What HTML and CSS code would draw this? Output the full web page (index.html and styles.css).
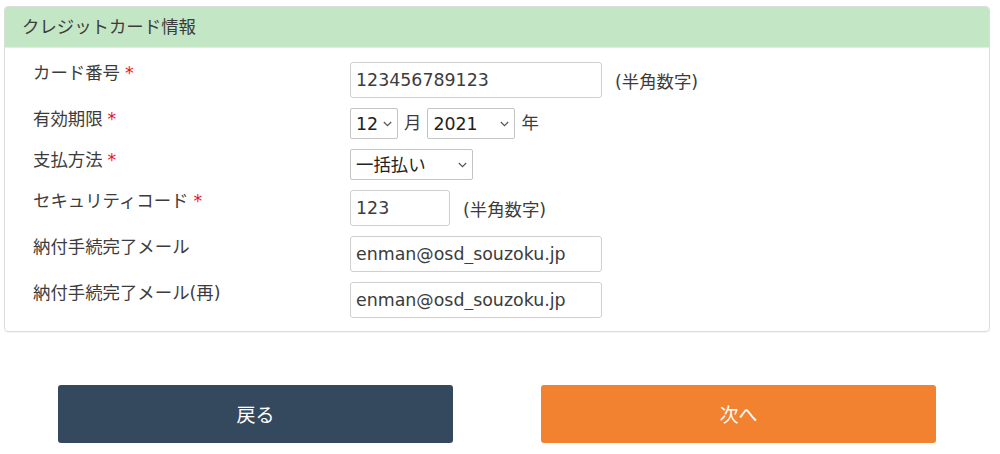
FILE: index.html
```html
<!DOCTYPE html>
<html lang="ja">
<head>
<meta charset="utf-8">
<title>クレジットカード情報</title>
<link rel="stylesheet" href="styles.css">
</head>
<body>
<div class="page">
  <section class="panel">
    <h2 class="panel-head">クレジットカード情報</h2>
    <div class="panel-body">
      <div class="row">
        <div class="label">カード番号<span class="req">*</span></div>
        <div class="field">
          <input class="input w-card" type="text" value="123456789123">
          <span class="note">(半角数字)</span>
        </div>
      </div>
      <div class="row">
        <div class="label">有効期限<span class="req">*</span></div>
        <div class="field gap-sm">
          <span class="select-wrap">
            <select class="select w-month"><option>12</option></select>
            <svg class="chev" width="9" height="6" viewBox="0 0 9 6"><path d="M0.8 1 L4.5 4.6 L8.2 1" fill="none" stroke="#555" stroke-width="1.2"/></svg>
          </span>
          <span class="unit">月</span>
          <span class="select-wrap">
            <select class="select w-year"><option>2021</option></select>
            <svg class="chev" width="9" height="6" viewBox="0 0 9 6"><path d="M0.8 1 L4.5 4.6 L8.2 1" fill="none" stroke="#555" stroke-width="1.2"/></svg>
          </span>
          <span class="unit">年</span>
        </div>
      </div>
      <div class="row">
        <div class="label">支払方法<span class="req">*</span></div>
        <div class="field">
          <span class="select-wrap">
            <select class="select w-pay"><option>一括払い</option></select>
            <svg class="chev" width="9" height="6" viewBox="0 0 9 6"><path d="M0.8 1 L4.5 4.6 L8.2 1" fill="none" stroke="#555" stroke-width="1.2"/></svg>
          </span>
        </div>
      </div>
      <div class="row">
        <div class="label">セキュリティコード<span class="req">*</span></div>
        <div class="field">
          <input class="input w-code" type="text" value="123">
          <span class="note">(半角数字)</span>
        </div>
      </div>
      <div class="row">
        <div class="label">納付手続完了メール</div>
        <div class="field">
          <input class="input w-card" type="text" value="enman@osd_souzoku.jp">
        </div>
      </div>
      <div class="row">
        <div class="label">納付手続完了メール(再)</div>
        <div class="field">
          <input class="input w-card" type="text" value="enman@osd_souzoku.jp">
        </div>
      </div>
    </div>
  </section>
  <div class="actions">
    <button class="btn btn-back" type="button">戻る</button>
    <button class="btn btn-next" type="button">次へ</button>
  </div>
</div>
</body>
</html>
```
FILE: styles.css
```css
* { box-sizing: border-box; }
html, body { margin: 0; padding: 0; background: #fff; }
body {
  font-family: "DejaVu Sans", "Noto Sans CJK JP", sans-serif;
  font-size: 17.4px;
  color: #3c3c3c;
}
.page {
  width: 986px;
  margin-left: 4px;
  padding-top: 6px;
}
.panel {
  border: 1px solid #dcdcdc;
  border-radius: 4px;
  box-shadow: 0 1px 1px rgba(0,0,0,0.04);
  overflow: hidden;
}
.panel-head {
  margin: 0;
  height: 41px;
  line-height: 41px;
  padding-left: 17px;
  background: #c3e6c4;
  font-size: 17.4px;
  font-weight: normal;
  color: #3c3c3c;
  border-bottom: 1px solid #e2eee2;
}
.panel-body {
  padding: 14px 0 3px 28px;
}
.row {
  display: grid;
  grid-template-columns: 317px 1fr;
  align-items: start;
  margin-bottom: 10px;
}
.label {
  line-height: 23px;
  white-space: nowrap;
}
.req {
  color: #e8141c;
  margin-left: 5px;
}
.field {
  display: flex;
  align-items: center;
  gap: 13px;
}
.field.gap-sm { gap: 6px; }
.input {
  height: 36px;
  border: 1px solid #cfcfcf;
  border-radius: 3px;
  padding: 0 5px;
  font: inherit;
  color: #3c3c3c;
  background: #fff;
}
.w-card { width: 252px; }
.w-code { width: 100px; }
.select-wrap {
  position: relative;
  display: inline-flex;
}
.select {
  -webkit-appearance: none;
  appearance: none;
  height: 31px;
  border: 1px solid #c4c4c4;
  border-radius: 2px;
  padding: 0 18px 0 5px;
  font: inherit;
  color: #222;
  background: #fff;
}
.chev {
  position: absolute;
  right: 6px;
  top: 13px;
  pointer-events: none;
}
.w-month { width: 48px; }
.w-year { width: 88px; }
.w-pay { width: 123px; }
.unit { line-height: 31px; }
.actions {
  display: flex;
  justify-content: center;
  gap: 88px;
  margin-top: 53px;
}
.btn {
  width: 395px;
  height: 58px;
  border: none;
  border-radius: 3px;
  color: #fff;
  font-family: "Noto Sans CJK JP", sans-serif;
  font-size: 19px;
  line-height: 1;
  padding-bottom: 3px;
  cursor: pointer;
}
.btn-back { background: #34495e; }
.btn-next { background: #f28230; }
```
